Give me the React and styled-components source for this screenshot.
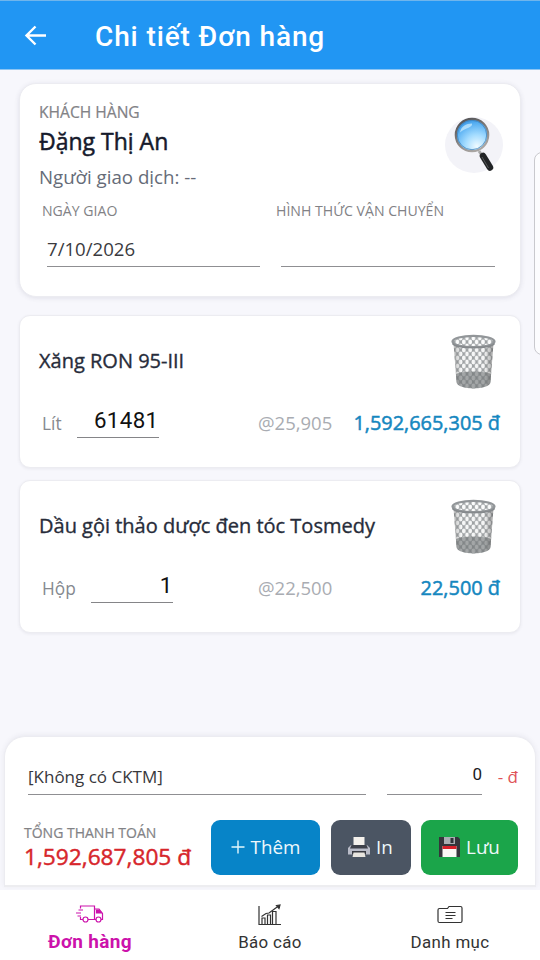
import React from 'react';
import styled, { createGlobalStyle } from 'styled-components';

const GlobalStyle = createGlobalStyle`
  * {
    box-sizing: border-box;
  }
  body {
    margin: 0;
    background: #f7f7fc;
    font-family: "Open Sans", "Noto Sans", sans-serif;
  }
`

const Screen = styled.div`
  position: relative;
  width: 540px;
  height: 960px;
  display: flex;
  flex-direction: column;
  overflow: hidden;
  background: #f7f7fc;
  white-space: nowrap;
`

const Header = styled.header`
  height: 70px;
  flex: none;
  display: flex;
  align-items: center;
  gap: 48px;
  padding: 2px 24px 0 23px;
  background: #2196f3;
  border-top: 1px solid #6fb5ec;
  border-bottom: 1px solid #8dc5f3;
`

const HeaderTitle = styled.h1`
  margin: 0;
  padding-top: 2px;
  font: 500 28px/40px Roboto, sans-serif;
  letter-spacing: 0.88px;
  color: #fff;
`

const Content = styled.main`
  flex: 1;
  padding: 13px 19px 0;
  display: flex;
  flex-direction: column;
`

const Card = styled.section`
  background: #fff;
  border: 1px solid #ececf1;
  border-radius: 17px;
  height: 214px;
  padding: 16px 17px 0 19px;
  margin-bottom: 18px;
  box-shadow: 0 1px 5px rgba(60, 60, 90, 0.12);
`

const CustomerRow = styled.div`
  display: flex;
  justify-content: space-between;
  height: 101px;
`

const Caption = styled.div`
  font-size: ${({ size }) => size || 15.6}px;
  line-height: ${({ line }) => line || 25}px;
  -webkit-text-stroke: ${({ stroke }) => stroke || 0}px;
  color: #828286;
`

const CustomerName = styled.div`
  font-size: 23px;
  line-height: 32px;
  -webkit-text-stroke: 0.5px;
  color: #161a2b;
`

const Contact = styled.div`
  margin-top: 7px;
  font-size: 18.7px;
  line-height: 26px;
  color: #666c78;
`

const SearchButton = styled.div`
  width: 58px;
  height: 56px;
  margin-top: 17px;
  border-radius: 50%;
  background: #f3f3f8;
  display: flex;
  justify-content: center;
`

const FieldRow = styled.div`
  display: grid;
  grid-template-columns: 218px 219px;
  column-gap: 16px;
  padding-left: 3px;
`

const Field = styled.div`
  display: flex;
  flex-direction: column;
`

const FieldValue = styled.div`
  height: 32px;
  margin: 14px 0 0 5px;
  font-size: 18.6px;
  line-height: 27px;
  color: #3b3b3f;
  border-bottom: 1.5px solid #8f8f92;
`

const ItemCard = styled.section`
  background: #fff;
  border: 1px solid #ececf1;
  border-radius: 11px;
  height: 153px;
  padding: 18px 20px 0 19px;
  margin-bottom: 12px;
  box-shadow: 0 1px 3px rgba(60, 60, 90, 0.08);
`

const ItemHead = styled.div`
  height: 55px;
  display: flex;
  align-items: center;
  justify-content: space-between;
  padding-right: 4px;
`

const ItemName = styled.div`
  margin-top: -1px;
  font-size: 20px;
  line-height: 28px;
  -webkit-text-stroke: 0.35px;
  color: #272c3a;
`

const ItemFoot = styled.div`
  display: grid;
  grid-template-columns: 216px 1fr auto;
  height: 48px;
  padding: 11px 0 0 3px;
`

const Quantity = styled.div`
  display: flex;
  gap: 15px;
`

const Unit = styled.span`
  font-size: 17.3px;
  line-height: 48px;
  color: #85898f;
`

const QuantityInput = styled.span`
  width: 82px;
  height: 38px;
  border-bottom: 1.5px solid #858588;
  font: 400 22.3px/41px Roboto, sans-serif;
  letter-spacing: 0.4px;
  text-align: right;
  color: #111;
`

const UnitPrice = styled.span`
  font-size: 18.5px;
  line-height: 46px;
  color: #a9acb2;
`

const Amount = styled.span`
  font-size: 19.9px;
  line-height: 46px;
  -webkit-text-stroke: 0.5px;
  color: #1587bf;
`

const Summary = styled.section`
  flex: none;
  height: 151px;
  margin: 0 4px 3px;
  padding: 19px 17px 0 19px;
  background: #fff;
  border: 1px solid #ececf1;
  border-bottom: 2px solid #ededf0;
  border-radius: 21px 21px 0 0;
  box-shadow: 0 -1px 5px rgba(60, 60, 90, 0.08);
`

const DiscountRow = styled.div`
  display: flex;
  height: 39px;
  padding-left: 4px;
`

const DiscountSelect = styled.div`
  width: 338px;
  margin-right: 21px;
  font-size: 17px;
  line-height: 42px;
  color: #38383c;
  border-bottom: 1.5px solid #8f8f92;
`

const DiscountInput = styled.div`
  width: 95px;
  font: 400 17px/36px Roboto, sans-serif;
  text-align: right;
  color: #1c1c1c;
  border-bottom: 1.5px solid #8f8f92;
`

const DiscountValue = styled.div`
  flex: 1;
  text-align: right;
  font-size: 17px;
  line-height: 42px;
  color: #e05359;
`

const TotalRow = styled.div`
  display: flex;
  justify-content: space-between;
  margin-top: 25px;
`

const Total = styled.div`
  margin-top: -1px;
  font-size: 22.7px;
  line-height: 26px;
  -webkit-text-stroke: 0.45px;
  color: #d7262b;
`

const Actions = styled.div`
  display: flex;
  gap: 10.5px;
`

const ActionButton = styled.button`
  width: ${({ width }) => width}px;
  height: 55px;
  border: 0;
  padding: 0 0 1px;
  border-radius: 9px;
  background: ${({ color }) => color};
  color: #eef8fb;
  font: 400 18.8px/26px "Open Sans", sans-serif;
  display: flex;
  align-items: center;
  justify-content: center;
  gap: 6px;
`

const TabBar = styled.nav`
  flex: none;
  height: 70px;
  display: grid;
  grid-template-columns: repeat(3, 1fr);
  background: #fff;
`

const Tab = styled.div`
  display: flex;
  flex-direction: column;
  align-items: center;
  padding-top: 14px;
  color: ${({ active }) => (active ? '#cc12ab' : '#333')};
  font: ${({ active }) => (active ? '700 19px' : '400 16.9px')}/24px Roboto, sans-serif;
  letter-spacing: 0.35px;
  svg {
    margin-bottom: 4px;
  }
`

// side panel handle, floats over the page
const EdgeHandle = styled.div`
  position: absolute;
  right: -12px;
  top: 152px;
  width: 18px;
  height: 203px;
  border: 1px solid #c9c9ce;
  border-radius: 8px;
  background: #fcfcfe;
`

const BackIcon = () => (
  <svg width="24" height="24" viewBox="0 0 24 24" fill="none" stroke="#fff" strokeWidth="2.4">
    <path d="M23 11.500H3.500M12.500 2.500l-9 9 9 9" />
  </svg>
)

const SearchIcon = () => (
  <svg width="44" height="56" viewBox="0 0 44 56">
    <defs>
      <radialGradient id="lens" cx="0.65" cy="0.85" r="0.9">
        <stop offset="0" stopColor="#f0fbff" />
        <stop offset="0.4" stopColor="#a4dcff" />
        <stop offset="0.8" stopColor="#55aef2" />
        <stop offset="1" stopColor="#2f8bdc" />
      </radialGradient>
      <linearGradient id="ring" x1="0" y1="0" x2="0.5" y2="1">
        <stop offset="0" stopColor="#4b4b4e" />
        <stop offset="1" stopColor="#a9a5a2" />
      </linearGradient>
    </defs>
    <path d="M27 34l4 6" stroke="#a8a8a8" strokeWidth="3" />
    <path d="M31 39l7 11.500" stroke="#222426" strokeWidth="6.5" strokeLinecap="round" />
    <path d="M30 40l6.500 11" stroke="#55585a" strokeWidth="1" />
    <circle cx="20" cy="18" r="16.2" fill="url(#lens)" stroke="url(#ring)" strokeWidth="2.2" />
    <circle cx="20" cy="18" r="14.7" fill="none" stroke="#3d80b9" strokeWidth="0.8" />
    <path d="M8 15.500c1-6 6-9 12-9 1 4-6 4-12 9z" fill="#d8f2ff" opacity="0.65" />
  </svg>
)

const TrashIcon = () => (
  <svg width="45" height="56" viewBox="0 0 45 56">
    <defs>
      <pattern id="mesh" width="6.4" height="8" patternUnits="userSpaceOnUse">
        <rect width="6.4" height="8" fill="#a0a4a6" />
        <ellipse cx="3.2" cy="4" rx="1.9" ry="2.400" fill="#fbfcfc" />
        <ellipse cx="0" cy="0" rx="1.9" ry="2.400" fill="#fbfcfc" />
        <ellipse cx="6.4" cy="0" rx="1.9" ry="2.400" fill="#fbfcfc" />
        <ellipse cx="0" cy="8" rx="1.9" ry="2.400" fill="#fbfcfc" />
        <ellipse cx="6.4" cy="8" rx="1.9" ry="2.400" fill="#fbfcfc" />
      </pattern>
      <linearGradient id="shade" x1="0" x2="1">
        <stop offset="0" stopColor="#555" stopOpacity="0.4" />
        <stop offset="0.2" stopColor="#888" stopOpacity="0.04" />
        <stop offset="0.75" stopColor="#888" stopOpacity="0.06" />
        <stop offset="1" stopColor="#444" stopOpacity="0.5" />
      </linearGradient>
    </defs>
    <path d="M2.5 9L5.500 48c.5 8.500 33.500 8.500 34 0L42.500 9z" fill="url(#mesh)" />
    <path d="M5 40c5-3.500 30-3.500 35 0l-.5 8c-.5 8.500-33.500 8.500-34 0z" fill="#6f7476" opacity="0.62" />
    <path d="M2.5 9L5.500 48c.5 8.500 33.500 8.500 34 0L42.500 9z" fill="url(#shade)" />
    <ellipse cx="22.500" cy="7.500" rx="21" ry="5.700" fill="url(#mesh)" stroke="#929699" strokeWidth="2.200" />
    <path d="M1.500 9.500c4 5.500 38 5.500 42 0" fill="none" stroke="#85898c" strokeWidth="1.400" />
  </svg>
)

const PrinterIcon = () => (
  <svg width="22" height="20" viewBox="0 0 22 20">
    <path d="M5.500 0h11v9h-11z" fill="#f4f1ec" />
    <path d="M3 8h16l3 3v6.500H0V11z" fill="#b9bcc8" />
    <path d="M3.500 8h15l1.500 3.500H2z" fill="#3e414a" />
    <path d="M4 14h14v3.500H4z" fill="#393b42" />
    <path d="M5.500 15.500h11l1 4.500h-13z" fill="#e8e5df" />
  </svg>
)

const FloppyIcon = () => (
  <svg width="21" height="20" viewBox="0 0 21 20">
    <path d="M0 0h19l2 2v18H0z" fill="#35353b" />
    <path d="M5 0h11v7H5z" fill="#a9adb2" />
    <path d="M11.500 1h3v5h-3z" fill="#303238" />
    <path d="M3.500 9h14v11h-14z" fill="#faf9f6" />
    <path d="M3.500 9h14v3h-14z" fill="#d8202a" />
  </svg>
)

const PlusIcon = () => (
  <svg width="14" height="14" viewBox="0 0 14 14" stroke="#e4f7fc" strokeWidth="1.400">
    <path d="M0.500 7h13M7 0.500v13" />
  </svg>
)

const TruckIcon = () => (
  <svg width="28" height="22" viewBox="0 0 28 22" fill="none" stroke="#cc12ab" strokeWidth="1.200">
    <path d="M4.500 4.500V2h14v13.500H12M7 15.500H4.500v-2.500M2.500 6H7M0 9h5M1.500 12h3.500" />
    <path d="M18.500 5h4.500l3.500 4.500V15.500H25M20 15.500h-1.500" />
    <path d="M20.500 6v3h5l-2.500-3z" fill="#cc12ab" />
    <circle cx="9.500" cy="15.500" r="2.500" />
    <circle cx="22.500" cy="15.500" r="2.500" />
  </svg>
)

const ChartIcon = () => (
  <svg width="24" height="22" viewBox="0 0 24 22" fill="none" stroke="#333" strokeWidth="1.200">
    <path d="M1 2v18.500h22" />
    <path d="M4 20v-6h3v6M9.500 20v-9h3v9M14.500 20V7.500h3.500V20" />
    <path d="M3.500 12.500L8 9.500l3-.5 9.500-7" />
    <path d="M18.500 1.500l3.500-.5-1 3.500z" fill="#333" />
  </svg>
)

const FolderIcon = () => (
  <svg width="26" height="22" viewBox="0 0 26 22" fill="none" stroke="#333" strokeWidth="1.200">
    <path d="M2.500 4.500h8l1.500-2h11.500q1.500 0 1.500 1.500v13q0 1.500-1.500 1.500h-21Q1 18.500 1 17V6q0-1.500 1.500-1.500z" />
    <path d="M8.500 8.500h10M8.500 11.500h10M8.500 14.500h7" />
  </svg>
)

const items = [
  { name: 'Xăng RON 95-III', unit: 'Lít', quantity: '61481', price: '@25,905', amount: '1,592,665,305 đ' },
  { name: 'Dầu gội thảo dược đen tóc Tosmedy', unit: 'Hộp', quantity: '1', price: '@22,500', amount: '22,500 đ' },
]

function OrderItem({ item }) {
  return (
    <ItemCard>
      <ItemHead>
        <ItemName>{item.name}</ItemName>
        <TrashIcon />
      </ItemHead>
      <ItemFoot>
        <Quantity>
          <Unit>{item.unit}</Unit>
          <QuantityInput>{item.quantity}</QuantityInput>
        </Quantity>
        <UnitPrice>{item.price}</UnitPrice>
        <Amount>{item.amount}</Amount>
      </ItemFoot>
    </ItemCard>
  );
}

function App() {
  return (
    <Screen>
      <GlobalStyle />
      <Header>
        <BackIcon />
        <HeaderTitle>Chi tiết Đơn hàng</HeaderTitle>
      </Header>
      <Content>
        <Card>
          <CustomerRow>
            <div>
              <Caption stroke={0.2}>KHÁCH HÀNG</Caption>
              <CustomerName>Đặng Thị An</CustomerName>
              <Contact>Người giao dịch: --</Contact>
            </div>
            <SearchButton>
              <SearchIcon />
            </SearchButton>
          </CustomerRow>
          <FieldRow>
            <Field>
              <Caption size={14.1} line={20}>NGÀY GIAO</Caption>
              <FieldValue>7/10/2026</FieldValue>
            </Field>
            <Field>
              <Caption size={14.1} line={20}>HÌNH THỨC VẬN CHUYỂN</Caption>
              <FieldValue />
            </Field>
          </FieldRow>
        </Card>
        {items.map((item) => (
          <OrderItem key={item.name} item={item} />
        ))}
      </Content>
      <Summary>
        <DiscountRow>
          <DiscountSelect>[Không có CKTM]</DiscountSelect>
          <DiscountInput>0</DiscountInput>
          <DiscountValue>- đ</DiscountValue>
        </DiscountRow>
        <TotalRow>
          <div>
            <Caption size={14} line={25} stroke={0.2}>TỔNG THANH TOÁN</Caption>
            <Total>1,592,687,805 đ</Total>
          </div>
          <Actions>
            <ActionButton width={109} color="#0784c8">
              <PlusIcon />
              Thêm
            </ActionButton>
            <ActionButton width={80} color="#4b5563">
              <PrinterIcon />
              In
            </ActionButton>
            <ActionButton width={97} color="#1ba54a">
              <FloppyIcon />
              Lưu
            </ActionButton>
          </Actions>
        </TotalRow>
      </Summary>
      <TabBar>
        <Tab active>
          <TruckIcon />
          Đơn hàng
        </Tab>
        <Tab>
          <ChartIcon />
          Báo cáo
        </Tab>
        <Tab>
          <FolderIcon />
          Danh mục
        </Tab>
      </TabBar>
      <EdgeHandle />
    </Screen>
  );
}

export default App;
